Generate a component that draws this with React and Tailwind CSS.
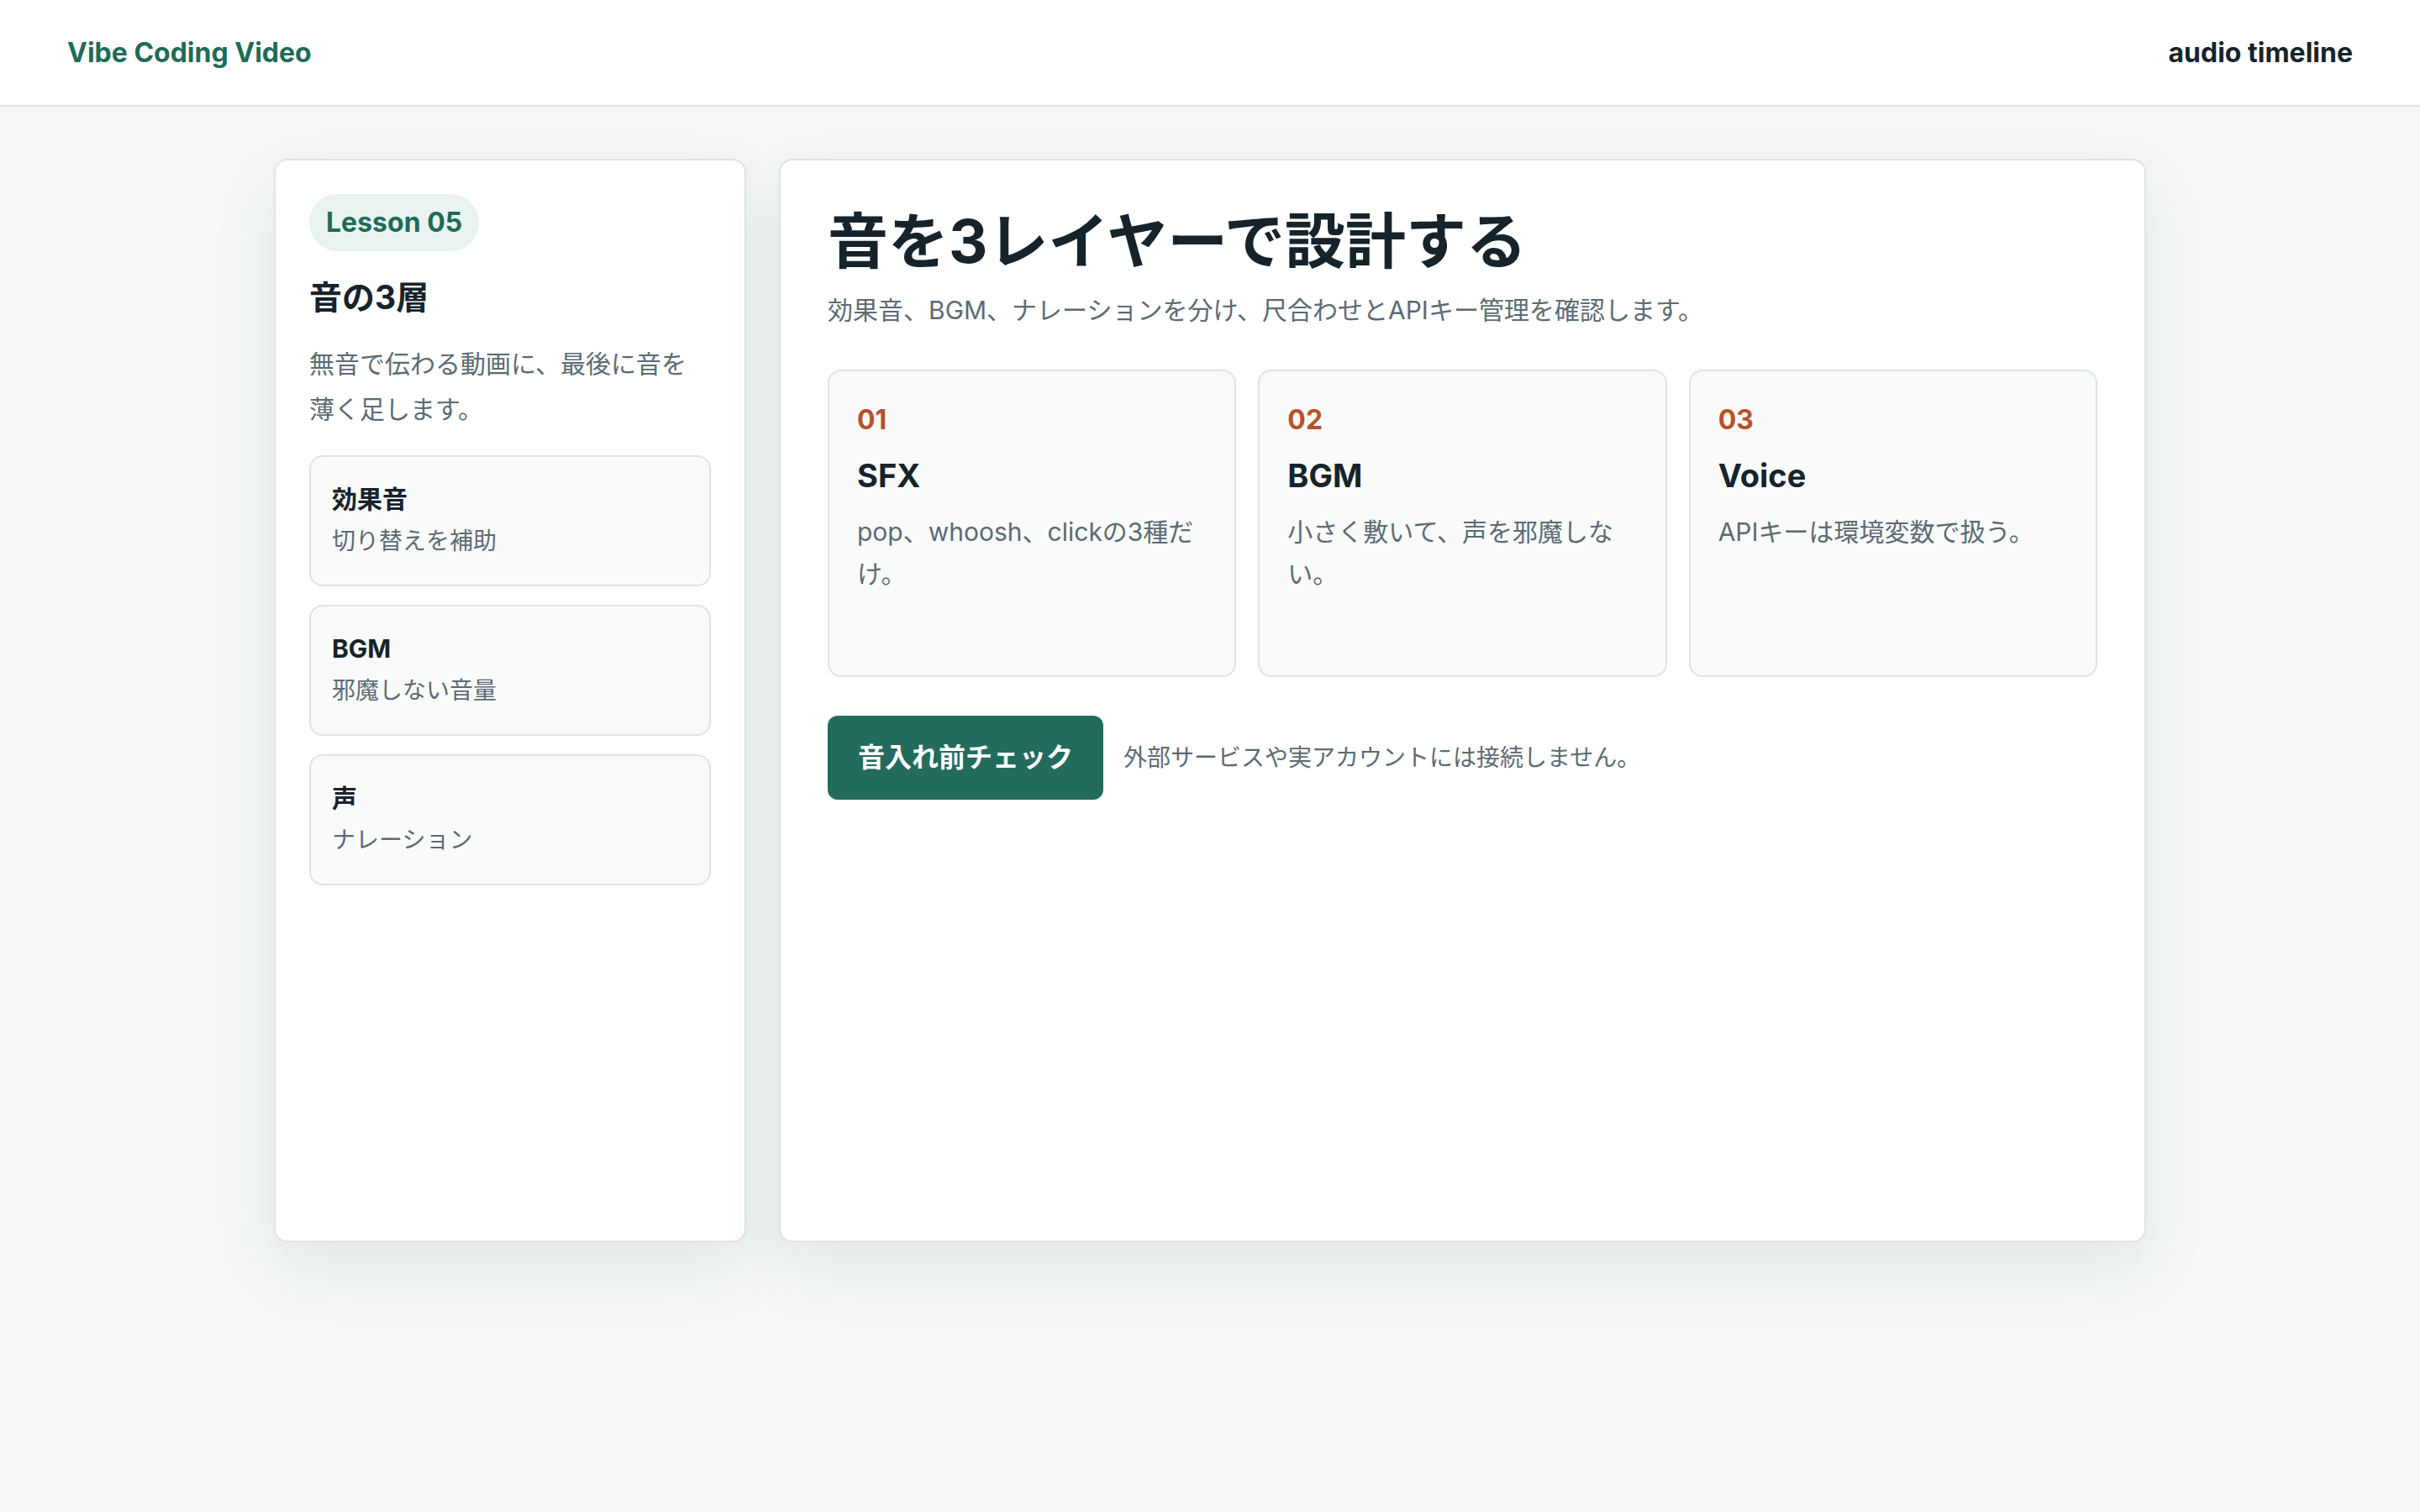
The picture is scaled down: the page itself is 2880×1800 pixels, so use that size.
const layers = [
  { title: "効果音", sub: "切り替えを補助" },
  { title: "BGM", sub: "邪魔しない音量" },
  { title: "声", sub: "ナレーション" },
];

const steps = [
  { no: "01", title: "SFX", body: "pop、whoosh、clickの3種だけ。" },
  { no: "02", title: "BGM", body: "小さく敷いて、声を邪魔しない。" },
  { no: "03", title: "Voice", body: "APIキーは環境変数で扱う。" },
];

export default function App() {
  return (
    <div
      className="min-h-screen bg-[#f4f7f6] text-[#17232b]"
      style={{ fontFamily: "Inter, 'Noto Sans CJK JP', sans-serif" }}
    >
      <header className="flex h-[127px] items-center justify-between border-b-2 border-[#dfe6e6] bg-white px-20">
        <span className="text-[32px] font-bold text-[#1f6b57]">Vibe Coding Video</span>
        <span className="text-[32px] font-bold text-[#17232b]">audio timeline</span>
      </header>

      <main className="mx-auto grid max-w-[2228px] grid-cols-[562px_1fr] gap-[39px] pt-[62px]">
        <aside className="h-[1290px] rounded-2xl border-2 border-[#dde5e8] bg-white p-10 shadow-[0_32px_80px_rgba(30,60,55,0.08)]">
          <span className="inline-block rounded-full bg-[#e9f4f1] px-5 py-[10px] text-[32px] font-bold text-[#1f6b57]">
            Lesson 05
          </span>
          <h2 className="mt-[26px] text-[39px] font-bold">音の3層</h2>
          <p className="mt-[22px] text-[30px] leading-[1.8] text-[#5c6b73]">
            無音で伝わる動画に、最後に音を薄く足します。
          </p>
          <div className="mt-[28px] flex flex-col gap-[22px]">
            {layers.map((l) => (
              <div key={l.title} className="h-[156px] rounded-2xl border-2 border-[#dde5e8] bg-[#f9fbfb] px-[25px] py-[28px]">
                <div className="text-[30px] font-bold leading-[44px]">{l.title}</div>
                <div className="mt-[8px] text-[28px] leading-[40px] text-[#5c6b73]">{l.sub}</div>
              </div>
            ))}
          </div>
        </aside>

        <section className="h-[1290px] rounded-2xl border-2 border-[#dde5e8] bg-white px-[56px] py-[52px] shadow-[0_32px_80px_rgba(30,60,55,0.08)]">
          <h1 className="text-[72px] font-bold leading-[88px]">音を3レイヤーで設計する</h1>
          <p className="mt-[16px] text-[30px] text-[#5c6b73]">
            効果音、BGM、ナレーションを分け、尺合わせとAPIキー管理を確認します。
          </p>
          <div className="mt-[48px] grid grid-cols-3 gap-[26px]">
            {steps.map((s) => (
              <div key={s.no} className="h-[366px] rounded-2xl border-2 border-[#dde5e8] bg-[#f9fbfb] px-[33px] py-[38px]">
                <div className="text-[32px] font-bold leading-[40px] text-[#b9512a]">{s.no}</div>
                <div className="mt-[22px] text-[38px] font-bold leading-[48px]">{s.title}</div>
                <div className="mt-[18px] text-[30px] leading-[50px] text-[#5c6b73]">{s.body}</div>
              </div>
            ))}
          </div>
          <div className="mt-[46px] flex items-center gap-6">
            <button className="h-[100px] rounded-xl bg-[#236b5c] px-9 text-[32px] font-bold text-white">
              音入れ前チェック
            </button>
            <span className="text-[28px] text-[#5c6b73]">外部サービスや実アカウントには接続しません。</span>
          </div>
        </section>
      </main>
    </div>
  );
}
